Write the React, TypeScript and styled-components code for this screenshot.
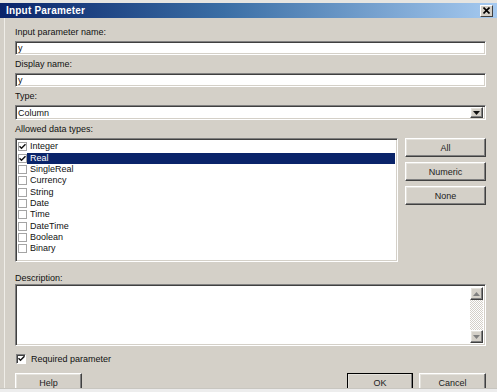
import React from 'react'
import styled, { createGlobalStyle } from 'styled-components'

const GlobalStyle = createGlobalStyle`
    html, body {
        margin: 0;
        padding: 0;
        background: #d4d0c8;
    }
    body {
        font-family: "Liberation Sans", Arial, sans-serif;
        font-size: 9px;
        color: #111;
    }
`

const Frame = styled("div")`
    width: 497px;
    height: 388px;
    display: flex;
    flex-direction: column;
    overflow: hidden;
    background: #d4d0c8;
`

const TopEdge = styled("div")`
    flex-shrink: 0;
    height: 3px;
    background: #e6e5e1;
`

const TitleBar = styled("div")`
    flex-shrink: 0;
    height: 15px;
    display: flex;
    align-items: center;
    justify-content: space-between;
    padding: 0 4px 0 6px;
    background: linear-gradient(to right, #0a246a 0%, #3a6ea5 45%, #a6caf0 100%);
`

const TitleText = styled("div")`
    color: white;
    font-weight: bold;
    font-size: 10px;
    letter-spacing: 0.2px;
`

const CloseButton = styled("div")`
    width: 11px;
    height: 10px;
    display: flex;
    align-items: center;
    justify-content: center;
    background: #d4d0c8;
    border: 1px solid;
    border-color: #fff #404040 #404040 #fff;
`

const Body = styled("div")`
    flex: 1 0 auto;
    margin-left: 4px;
    border-left: 1px solid #efede8;
    padding: 9px 11px 0 10px;
    display: flex;
    flex-direction: column;
`

const Label = styled("div")`
    line-height: 11px;
    height: 11px;
    margin-bottom: 3px;
    white-space: nowrap;
`

const Field = styled("div")`
    display: flex;
    flex-direction: column;
    margin-bottom: 4px;
`

const Sunken = styled("div")`
    box-sizing: border-box;
    flex-shrink: 0;
    background: white;
    border: 1px solid;
    border-color: #808080 #fff #fff #808080;
    box-shadow: inset 1px 1px #404040, inset -1px -1px #d4d0c8;
`

const TextBox = styled(Sunken)`
    height: 14px;
    line-height: 12px;
    padding-left: 2px;
`

const SelectBox = styled(Sunken)`
    height: 15px;
    display: flex;
    align-items: center;
    justify-content: space-between;
    padding: 2px;
`

const Raised = styled("div")`
    box-sizing: border-box;
    flex-shrink: 0;
    background: #d4d0c8;
    border: 1px solid;
    border-color: #fff #404040 #404040 #fff;
    box-shadow: inset -1px -1px #808080, inset 1px 1px #e4e2dc;
    display: flex;
    align-items: center;
    justify-content: center;
`

const DropButton = styled(Raised)`
    width: 13px;
    height: 11px;
`

const ListArea = styled("div")`
    display: flex;
    gap: 7px;
`

const ListBox = styled(Sunken)`
    width: 383px;
    height: 124px;
    padding: 2px;
    display: flex;
    flex-direction: column;
`

const ListItem = styled("div")`
    flex-shrink: 0;
    height: 11.35px;
    display: flex;
    align-items: center;
`

const ItemText = styled("div")<{ selected?: boolean }>`
    flex: 1;
    height: 11px;
    line-height: 11px;
    padding-left: 3px;
    background: ${(p) => (p.selected ? "#0a246a" : "transparent")};
    color: ${(p) => (p.selected ? "white" : "#111")};
`

const FlatCheck = styled("div")`
    box-sizing: border-box;
    width: 9px;
    height: 9px;
    border: 1px solid #a4a4a4;
    background: white;
    display: flex;
    align-items: center;
    justify-content: center;
`

const SideButtons = styled("div")`
    display: flex;
    flex-direction: column;
    gap: 5px;
`

const PushButton = styled(Raised)<{ w: number; isDefault?: boolean }>`
    width: ${(p) => p.w}px;
    height: 19px;
    color: #222;
    ${(p) => (p.isDefault ? "outline: 1px solid #000; outline-offset: -1px;" : "")}
`

const DescLabel = styled(Label)`
    margin-top: 11px;
    margin-bottom: 0px;
`

const DescBox = styled(Sunken)`
    height: 62px;
    display: flex;
    justify-content: flex-end;
    padding: 2px;
`

const ScrollBar = styled("div")`
    width: 13px;
    display: flex;
    flex-direction: column;
    justify-content: space-between;
    background-color: #eeede9;
    background-image: repeating-conic-gradient(#d4d0c8 0 25%, #fff 0 50%);
    background-size: 2px 2px;
`

const ScrollButton = styled(Raised)`
    width: 13px;
    height: 13px;
`

const CheckRow = styled("div")`
    display: flex;
    align-items: center;
    gap: 5px;
    margin-top: 7px;
    margin-left: 1px;
    height: 11px;
`

const SunkenCheck = styled("div")`
    box-sizing: border-box;
    width: 10px;
    height: 10px;
    background: white;
    border: 1px solid;
    border-color: #808080 #fff #fff #808080;
    box-shadow: inset 1px 1px #404040;
    display: flex;
    align-items: center;
    justify-content: center;
`

const ButtonRow = styled("div")`
    display: flex;
    gap: 6px;
    margin-top: 9px;
`

const Spacer = styled("div")`
    flex: 1;
`

const BottomStrip = styled("div")`
    height: 4px;
    background: #ededed;
    border-top: 1px solid #c8c6c0;
`

const CheckMark = () => (
    <svg width="7" height="7" viewBox="0 0 7 7">
        <path d="M0.5 3.2 L2.5 5.3 L6.5 1.2" fill="none" stroke="#111" strokeWidth="1.4" />
    </svg>
)

const Arrow = (props: { up?: boolean; color?: string }) => (
    <svg width="7" height="4" viewBox="0 0 7 4">
        <path d={props.up ? "M0 4 L3.5 0 L7 4 Z" : "M0 0 L7 0 L3.5 4 Z"} fill={props.color || "#111"} />
    </svg>
)

const types = ["Integer", "Real", "SingleReal", "Currency", "String", "Date", "Time", "DateTime", "Boolean", "Binary"]
const checked = ["Integer", "Real"]

export default function App() {
    return (
        <>
            <GlobalStyle />
            <Frame>
                <TopEdge />
                <TitleBar>
                    <TitleText>Input Parameter</TitleText>
                    <CloseButton>
                        <svg width="7" height="7" viewBox="0 0 7 7">
                            <path d="M0.5 0.5 L6.5 6.5 M6.5 0.5 L0.5 6.5" stroke="#000" strokeWidth="1.6" />
                        </svg>
                    </CloseButton>
                </TitleBar>
                <Body>
                    <Field>
                        <Label>Input parameter name:</Label>
                        <TextBox>y</TextBox>
                    </Field>
                    <Field>
                        <Label>Display name:</Label>
                        <TextBox>y</TextBox>
                    </Field>
                    <Field>
                        <Label>Type:</Label>
                        <SelectBox>
                            <span>Column</span>
                            <DropButton>
                                <Arrow />
                            </DropButton>
                        </SelectBox>
                    </Field>
                    <Label>Allowed data types:</Label>
                    <ListArea>
                        <ListBox>
                            {types.map((t) => (
                                <ListItem key={t}>
                                    <FlatCheck>{checked.includes(t) && <CheckMark />}</FlatCheck>
                                    <ItemText selected={t === "Real"}>{t}</ItemText>
                                </ListItem>
                            ))}
                        </ListBox>
                        <SideButtons>
                            <PushButton w={81}>All</PushButton>
                            <PushButton w={81}>Numeric</PushButton>
                            <PushButton w={81}>None</PushButton>
                        </SideButtons>
                    </ListArea>
                    <DescLabel>Description:</DescLabel>
                    <DescBox>
                        <ScrollBar>
                            <ScrollButton>
                                <Arrow up color="#808080" />
                            </ScrollButton>
                            <ScrollButton>
                                <Arrow color="#808080" />
                            </ScrollButton>
                        </ScrollBar>
                    </DescBox>
                    <CheckRow>
                        <SunkenCheck>
                            <CheckMark />
                        </SunkenCheck>
                        <span>Required parameter</span>
                    </CheckRow>
                    <ButtonRow>
                        <PushButton w={67}>Help</PushButton>
                        <Spacer />
                        <PushButton w={66} isDefault>OK</PushButton>
                        <PushButton w={67}>Cancel</PushButton>
                    </ButtonRow>
                </Body>
            </Frame>
            <BottomStrip />
        </>
    )
}
